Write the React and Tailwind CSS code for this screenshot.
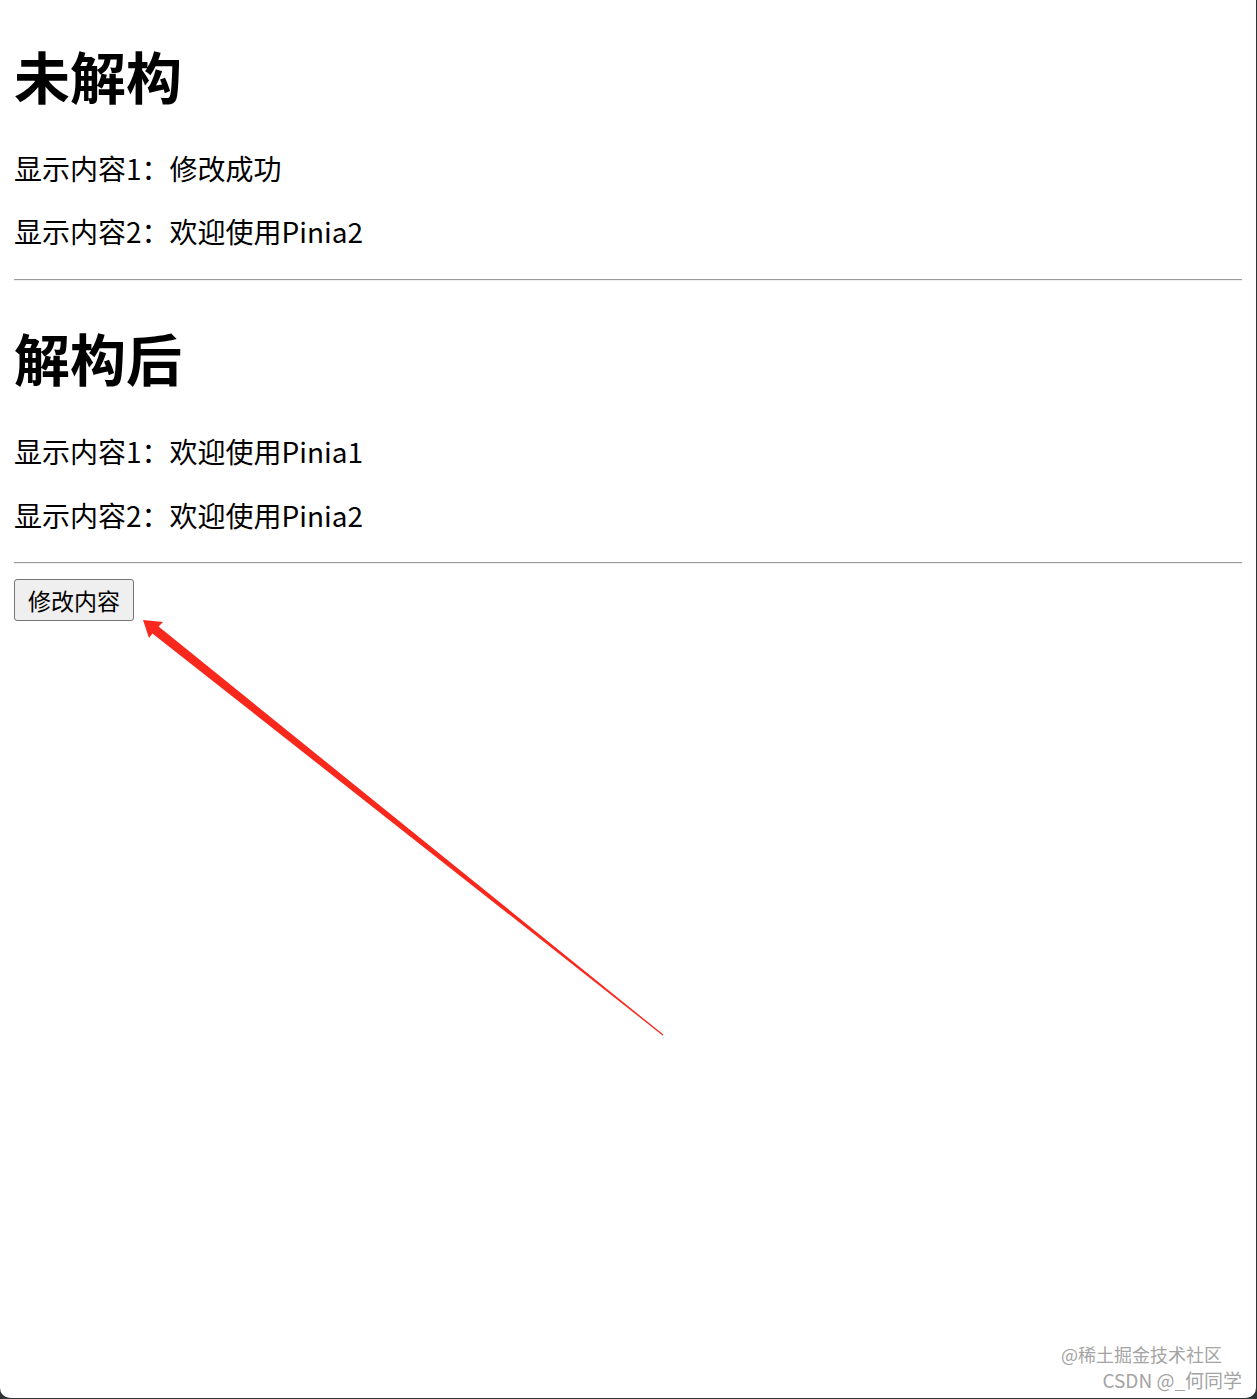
import React from "react";

const cjk = { fontFamily: '"Noto Sans CJK SC", "Noto Sans", sans-serif' };

function Arrow() {
  // red hand-drawn arrow pointing at the button
  return (
    <svg
      className="absolute left-0 top-0 pointer-events-none"
      width="1257"
      height="1399"
      viewBox="0 0 1257 1399"
    >
      <polygon
        points="143,620 163,622 158.6,626.6 663.4,1034.6 662.6,1035.4 152.4,633.4 149,638"
        fill="#f8281c"
      />
    </svg>
  );
}

function Section({ title, first, second, gapTop, gapMid }) {
  return (
    <>
      <h1 className="text-[56px] leading-[64px] font-bold text-black">{title}</h1>
      <p className={`${gapTop} text-[28px] leading-[36px] text-black`}>{first}</p>
      <p className={`${gapMid} text-[28px] leading-[36px] text-black`}>{second}</p>
    </>
  );
}

function Rule() {
  return (
    <div className="flex flex-col">
      <div className="h-px bg-[#9a9a9a]" />
      <div className="h-px bg-[#eeeeee]" />
    </div>
  );
}

export default function App() {
  return (
    <div className="w-[1257px] h-[1399px] bg-[#2b3533] overflow-hidden" style={cjk}>
      <div className="relative w-[1256px] h-[1398px] bg-white rounded-b-[10px]">
        <div className="pl-[14px] pr-[14px] pt-[43px] flex flex-col">
          <Section
            title="未解构"
            first="显示内容1：修改成功"
            second="显示内容2：欢迎使用Pinia2"
            gapTop="mt-[43px]"
            gapMid="mt-[27px]"
          />
          <div className="mt-[30px]">
            <Rule />
          </div>
          <div className="mt-[44px]">
            <Section
              title="解构后"
              first="显示内容1：欢迎使用Pinia1"
              second="显示内容2：欢迎使用Pinia2"
              gapTop="mt-[44px]"
              gapMid="mt-[28px]"
            />
          </div>
          <div className="mt-[29px]">
            <Rule />
          </div>
          <div className="mt-[15px]">
            <button className="h-[42px] px-[13px] border border-[#767676] rounded-[3px] bg-[#efefef] text-[23px] leading-none text-black">
              修改内容
            </button>
          </div>
        </div>

        <Arrow />

        <div className="absolute right-[34px] top-[1341px] text-[18px] leading-[26px] text-[#a4a4a4] [text-shadow:0_0_2px_#ffffff]">
          @稀土掘金技术社区
        </div>
        <div className="absolute right-[14px] top-[1367px] text-[19px] leading-[26px] text-[#a4a4a4] [text-shadow:0_0_2px_#ffffff]">
          CSDN @_何同学
        </div>
      </div>
    </div>
  );
}
